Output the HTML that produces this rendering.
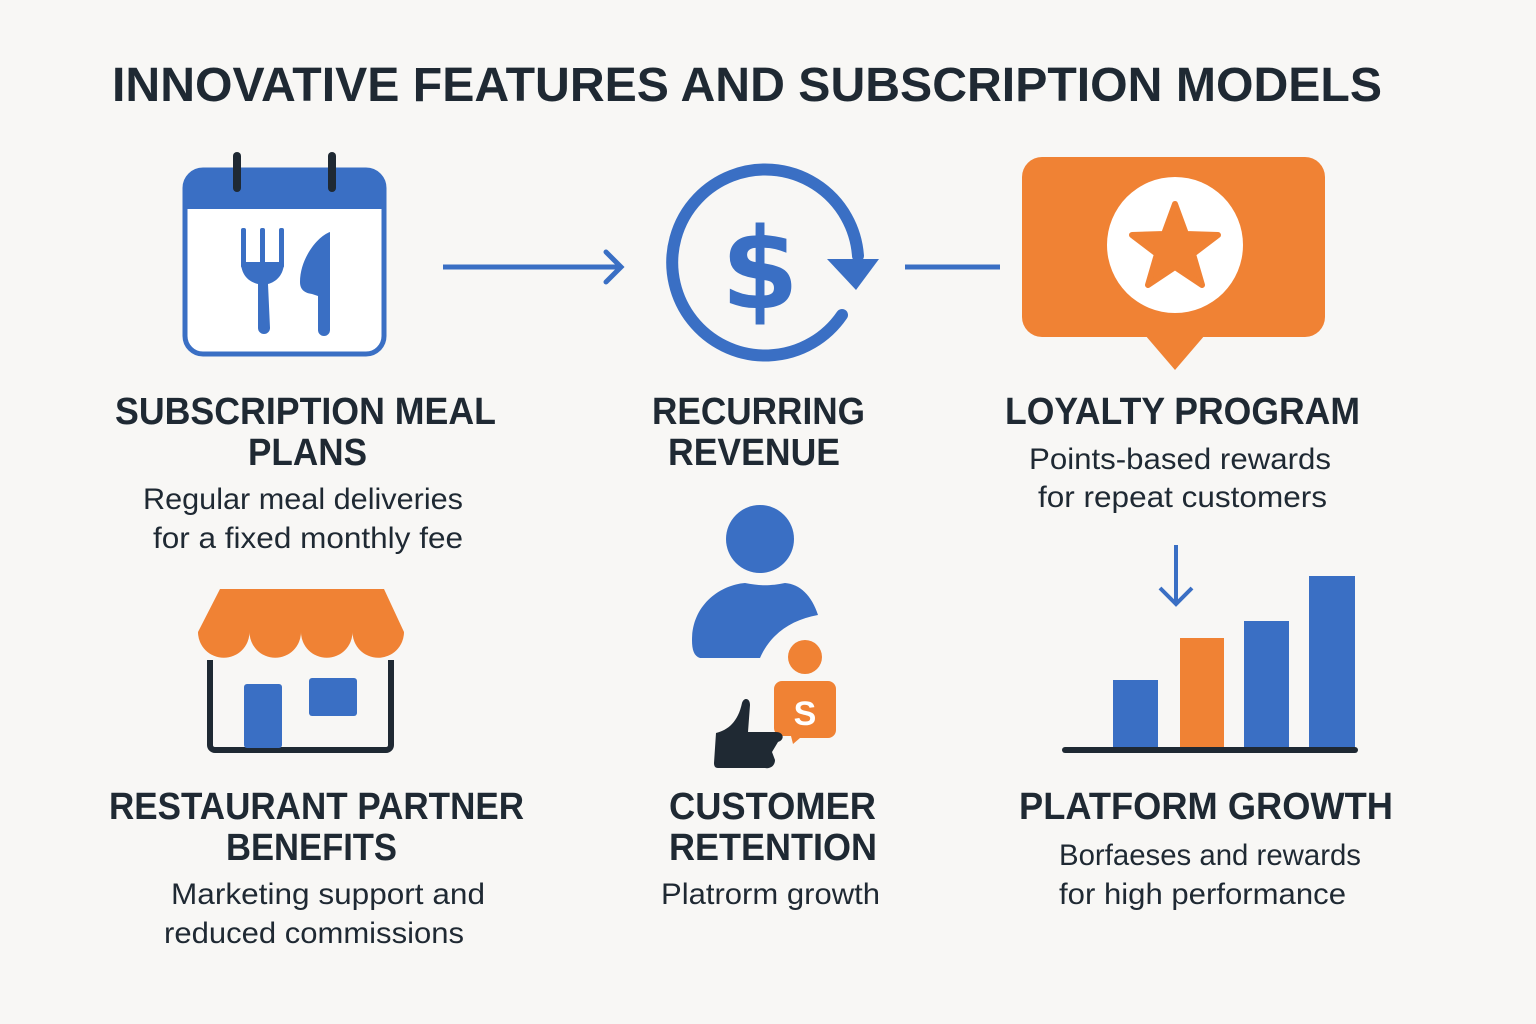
<!DOCTYPE html>
<html><head><meta charset="utf-8"><style>
html,body{margin:0;padding:0;background:#f8f7f5;}
svg{display:block;}
.h{font-family:"Liberation Sans",sans-serif;font-weight:bold;fill:#1f2933;}
.b{font-family:"Liberation Sans",sans-serif;fill:#1f2933;}
</style></head><body>
<svg width="1536" height="1024" viewBox="0 0 1536 1024" xmlns="http://www.w3.org/2000/svg">
<rect width="1536" height="1024" fill="#f8f7f5"/>
<text class="h" x="112" y="101" font-size="48" textLength="1270" lengthAdjust="spacingAndGlyphs">INNOVATIVE FEATURES AND SUBSCRIPTION MODELS</text>

<!-- calendar -->
<rect x="185" y="170" width="199" height="184" rx="18" fill="#fff" stroke="#3a6fc4" stroke-width="5"/>
<path d="M185 209 V188 a18 18 0 0 1 18 -18 H366 a18 18 0 0 1 18 18 V209 Z" fill="#3a6fc4"/>
<line x1="237" y1="156" x2="237" y2="188" stroke="#1f2933" stroke-width="8" stroke-linecap="round"/>
<line x1="332" y1="156" x2="332" y2="188" stroke="#1f2933" stroke-width="8" stroke-linecap="round"/>
<rect x="241" y="228" width="5" height="40" rx="2" fill="#3a6fc4"/>
<rect x="260" y="228" width="5" height="40" rx="2" fill="#3a6fc4"/>
<rect x="279" y="228" width="5" height="40" rx="2" fill="#3a6fc4"/>
<path d="M241 262 H284 C284 275 276 282 268 284 L270 328 a5 5 0 0 1 -12 0 L258 284 C249 282 241 275 241 262 Z" fill="#3a6fc4"/>
<path d="M330 232 C318 236 300 258 300 282 C300 290 305 293 312 294 L318 296 L318 330 a6 6 0 0 0 12 0 Z" fill="#3a6fc4"/>

<!-- arrow -->
<line x1="443" y1="267" x2="620" y2="267" stroke="#3a6fc4" stroke-width="5"/>
<polyline points="606,252 621,267 606,282" fill="none" stroke="#3a6fc4" stroke-width="5" stroke-linecap="round"/>

<!-- dollar circle -->
<path d="M858 256 A93 93 0 1 0 842 315" fill="none" stroke="#3a6fc4" stroke-width="12" stroke-linecap="round"/>
<polygon points="827,259 879,259 856,290" fill="#3a6fc4"/>
<text x="760" y="308" text-anchor="middle" font-family="DejaVu Sans,sans-serif" font-weight="bold" font-size="112" fill="#3a6fc4">$</text>
<line x1="905" y1="267" x2="1000" y2="267" stroke="#3a6fc4" stroke-width="5"/>

<!-- loyalty -->
<rect x="1022" y="157" width="303" height="180" rx="20" fill="#f08234"/>
<polygon points="1145,335 1205,335 1175,370" fill="#f08234"/>
<circle cx="1175" cy="245" r="68" fill="#fff"/>
<polygon points="1175,204 1186,234 1218,235 1193,254 1202,285 1175,267 1148,285 1157,254 1132,235 1164,234" fill="#f08234" stroke="#f08234" stroke-width="6" stroke-linejoin="round"/>

<!-- headings row 1 -->
<text class="h" x="115" y="424" font-size="38" textLength="381" lengthAdjust="spacingAndGlyphs">SUBSCRIPTION MEAL</text>
<text class="h" x="248" y="465" font-size="38" textLength="119" lengthAdjust="spacingAndGlyphs">PLANS</text>
<text class="b" x="143" y="509" font-size="30" textLength="320" lengthAdjust="spacingAndGlyphs">Regular meal deliveries</text>
<text class="b" x="153" y="548" font-size="30" textLength="310" lengthAdjust="spacingAndGlyphs">for a fixed monthly fee</text>
<text class="h" x="652" y="424" font-size="38" textLength="213" lengthAdjust="spacingAndGlyphs">RECURRING</text>
<text class="h" x="668" y="465" font-size="38" textLength="172" lengthAdjust="spacingAndGlyphs">REVENUE</text>
<text class="h" x="1005" y="424" font-size="38" textLength="355" lengthAdjust="spacingAndGlyphs">LOYALTY PROGRAM</text>
<text class="b" x="1029" y="469" font-size="30" textLength="302" lengthAdjust="spacingAndGlyphs">Points-based rewards</text>
<text class="b" x="1038" y="507" font-size="30" textLength="289" lengthAdjust="spacingAndGlyphs">for repeat customers</text>

<!-- store -->
<path d="M210 660 V745 a5 5 0 0 0 5 5 H386 a5 5 0 0 0 5 -5 V660" fill="none" stroke="#1f2933" stroke-width="6"/>
<path d="M220 589 H384 L404 632 A25.75 25.75 0 0 1 352.5 632 A25.75 25.75 0 0 1 301 632 A25.75 25.75 0 0 1 249.5 632 A25.75 25.75 0 0 1 198 632 Z" fill="#f08234"/>
<rect x="244" y="684" width="38" height="64" rx="3" fill="#3a6fc4"/>
<rect x="309" y="678" width="48" height="38" rx="3" fill="#3a6fc4"/>

<!-- person -->
<circle cx="760" cy="539" r="34" fill="#3a6fc4"/>
<path d="M692 640 C692 605 720 585 745 583 C760 586 770 586 785 583 C800 584 812 596 818 615 C790 620 770 635 760 658 H700 C694 656 692 650 692 640 Z" fill="#3a6fc4"/>
<circle cx="805" cy="657" r="17" fill="#f08234"/>
<path d="M782 681 H828 a8 8 0 0 1 8 8 V730 a8 8 0 0 1 -8 8 H800 L793 744 L791 736 H782 a8 8 0 0 1 -8 -8 V689 a8 8 0 0 1 8 -8 Z" fill="#f08234"/>
<text x="805" y="725" text-anchor="middle" font-family="Liberation Sans,sans-serif" font-weight="bold" font-size="34" fill="#fff">S</text>
<path d="M716 733 C728 730 738 722 742 703 C744 697 750 698 750 705 L748 732 H776 C784 732 785 740 778 742 L772 752 L775 760 C775 766 770 769 765 768 H718 C715 768 714 766 714 763 Z" fill="#1f2933"/>

<!-- bars -->
<line x1="1176" y1="545" x2="1176" y2="603" stroke="#3a6fc4" stroke-width="4"/>
<polyline points="1160,588 1176,604 1192,588" fill="none" stroke="#3a6fc4" stroke-width="4"/>
<rect x="1113" y="680" width="45" height="70" fill="#3a6fc4"/>
<rect x="1180" y="638" width="44" height="112" fill="#f08234"/>
<rect x="1244" y="621" width="45" height="129" fill="#3a6fc4"/>
<rect x="1309" y="576" width="46" height="174" fill="#3a6fc4"/>
<line x1="1065" y1="750" x2="1355" y2="750" stroke="#1f2933" stroke-width="6" stroke-linecap="round"/>

<!-- headings row 2 -->
<text class="h" x="109" y="819" font-size="38" textLength="415" lengthAdjust="spacingAndGlyphs">RESTAURANT PARTNER</text>
<text class="h" x="226" y="860" font-size="38" textLength="171" lengthAdjust="spacingAndGlyphs">BENEFITS</text>
<text class="b" x="171" y="904" font-size="30" textLength="314" lengthAdjust="spacingAndGlyphs">Marketing support and</text>
<text class="b" x="164" y="943" font-size="30" textLength="300" lengthAdjust="spacingAndGlyphs">reduced commissions</text>
<text class="h" x="669" y="819" font-size="38" textLength="207" lengthAdjust="spacingAndGlyphs">CUSTOMER</text>
<text class="h" x="669" y="860" font-size="38" textLength="208" lengthAdjust="spacingAndGlyphs">RETENTION</text>
<text class="b" x="661" y="904" font-size="30" textLength="219" lengthAdjust="spacingAndGlyphs">Platrorm growth</text>
<text class="h" x="1019" y="819" font-size="38" textLength="374" lengthAdjust="spacingAndGlyphs">PLATFORM GROWTH</text>
<text class="b" x="1059" y="865" font-size="30" textLength="302" lengthAdjust="spacingAndGlyphs">Borfaeses and rewards</text>
<text class="b" x="1059" y="904" font-size="30" textLength="287" lengthAdjust="spacingAndGlyphs">for high performance</text>
</svg>
</body></html>
